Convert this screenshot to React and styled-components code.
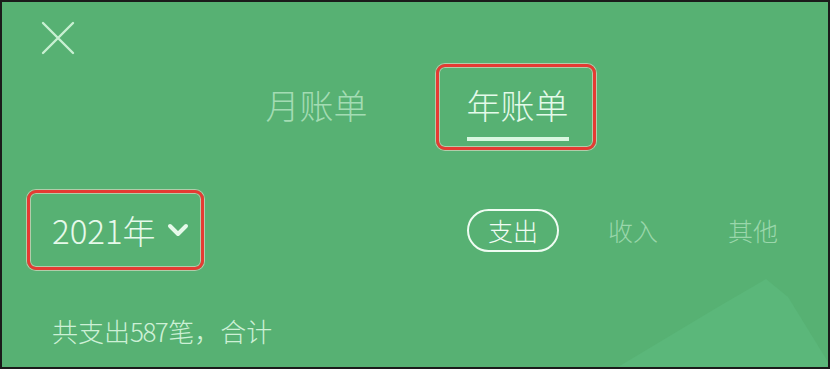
import React, { useState } from 'react'
import styled, { createGlobalStyle } from 'styled-components'

const GlobalStyle = createGlobalStyle`
  * { box-sizing: border-box; }
  body {
    margin: 0;
    background: #1b1b1b;
    font-family: "Noto Sans CJK SC", "Noto Sans", sans-serif;
    font-weight: 300;
  }
`

const Screen = styled.div`
  position: relative;
  width: 830px;
  height: 369px;
  overflow: hidden;
  border: 2px solid #1b1b1b;
  background: #57b173;
  display: flex;
  flex-direction: column;
`

const Hill = styled.svg`
  position: absolute;
  right: 0;
  bottom: 0;
  pointer-events: none;
`

const TopBar = styled.div`
  height: 62px;
  padding: 18px 0 0 38px;
`

const CloseButton = styled.button`
  width: 36px;
  height: 36px;
  padding: 0;
  border: none;
  background: transparent;
  cursor: pointer;
  display: flex;
`

const Tabs = styled.div`
  display: flex;
  justify-content: center;
  gap: 41px;
`

const Annotated = styled.div`
  border: 3px solid ${props => (props.marked ? '#e53b33' : 'transparent')};
  border-radius: 9px;
  box-shadow: ${props =>
    props.marked
      ? '0 0 0 1px rgba(255, 225, 215, 0.55), inset 0 0 0 1px rgba(255, 225, 215, 0.55)'
      : 'none'};
`

const Tab = styled(Annotated)`
  display: flex;
  flex-direction: column;
  align-items: stretch;
  padding: 20px 24px 6px 28px;
  cursor: pointer;
`

const TabLabel = styled.span`
  font-size: 34px;
  line-height: 36px;
  color: ${props => (props.active ? '#e4faea' : '#a3dcb3')};
`

const Underline = styled.span`
  margin-top: 14px;
  height: 4px;
  background: ${props => (props.active ? '#d9f7e0' : 'transparent')};
`

const FilterRow = styled.div`
  margin-top: 40px;
  display: flex;
  align-items: center;
  justify-content: space-between;
  padding: 0 29px 0 25px;
`

const YearPicker = styled(Annotated)`
  display: flex;
  align-items: center;
  gap: 11px;
  height: 80px;
  padding: 0 12px 0 22px;
  cursor: pointer;
`

const YearText = styled.span`
  font-size: 33px;
  color: #e6f9ea;
`

const Kinds = styled.div`
  display: flex;
  gap: 28px;
`

const Kind = styled.span`
  display: flex;
  align-items: center;
  height: 43px;
  padding: 0 19px;
  border: 2px solid ${props => (props.active ? '#effcf2' : 'transparent')};
  border-radius: 22px;
  font-size: 25px;
  color: ${props => (props.active ? '#f1fcf4' : '#9ad7ab')};
  cursor: pointer;
`

const Summary = styled.div`
  margin-top: 42px;
  padding-left: 50px;
  font-size: 26px;
  color: #cdf0d6;
`

const Count = styled.span`
  letter-spacing: -1.5px;
  margin-right: 1px;
`

const tabs = ['月账单', '年账单']
const kinds = ['支出', '收入', '其他']

export default function App() {
  const [tab, setTab] = useState(1)
  const [kind, setKind] = useState(0)

  return (
    <>
      <GlobalStyle />
      <Screen>
        <Hill width="230" height="100" viewBox="0 0 230 100">
          <polygon points="20,100 120,40 168,12 190,30 230,95 230,100" fill="#5bb77a" />
        </Hill>
        <TopBar>
          <CloseButton aria-label="关闭">
            <svg width="36" height="36" viewBox="0 0 36 36">
              <path d="M3 3 L33 33 M33 3 L3 33" stroke="#c8f0d2" strokeWidth="2.4" strokeLinecap="round" />
            </svg>
          </CloseButton>
        </TopBar>
        <Tabs>
          {tabs.map((t, i) => (
            <Tab key={t} marked={i === 1} onClick={() => setTab(i)}>
              <TabLabel active={tab === i}>{t}</TabLabel>
              <Underline active={tab === i} />
            </Tab>
          ))}
        </Tabs>
        <FilterRow>
          <YearPicker marked>
            <YearText>2021年</YearText>
            <svg width="22" height="16" viewBox="0 0 22 16">
              <path d="M3 4 L11 12 L19 4" fill="none" stroke="#e6f9ea" strokeWidth="4" strokeLinecap="round" strokeLinejoin="round" />
            </svg>
          </YearPicker>
          <Kinds>
            {kinds.map((k, i) => (
              <Kind key={k} active={kind === i} onClick={() => setKind(i)}>
                {k}
              </Kind>
            ))}
          </Kinds>
        </FilterRow>
        <Summary>
          共支出<Count>587</Count>笔，合计
        </Summary>
      </Screen>
    </>
  )
}
